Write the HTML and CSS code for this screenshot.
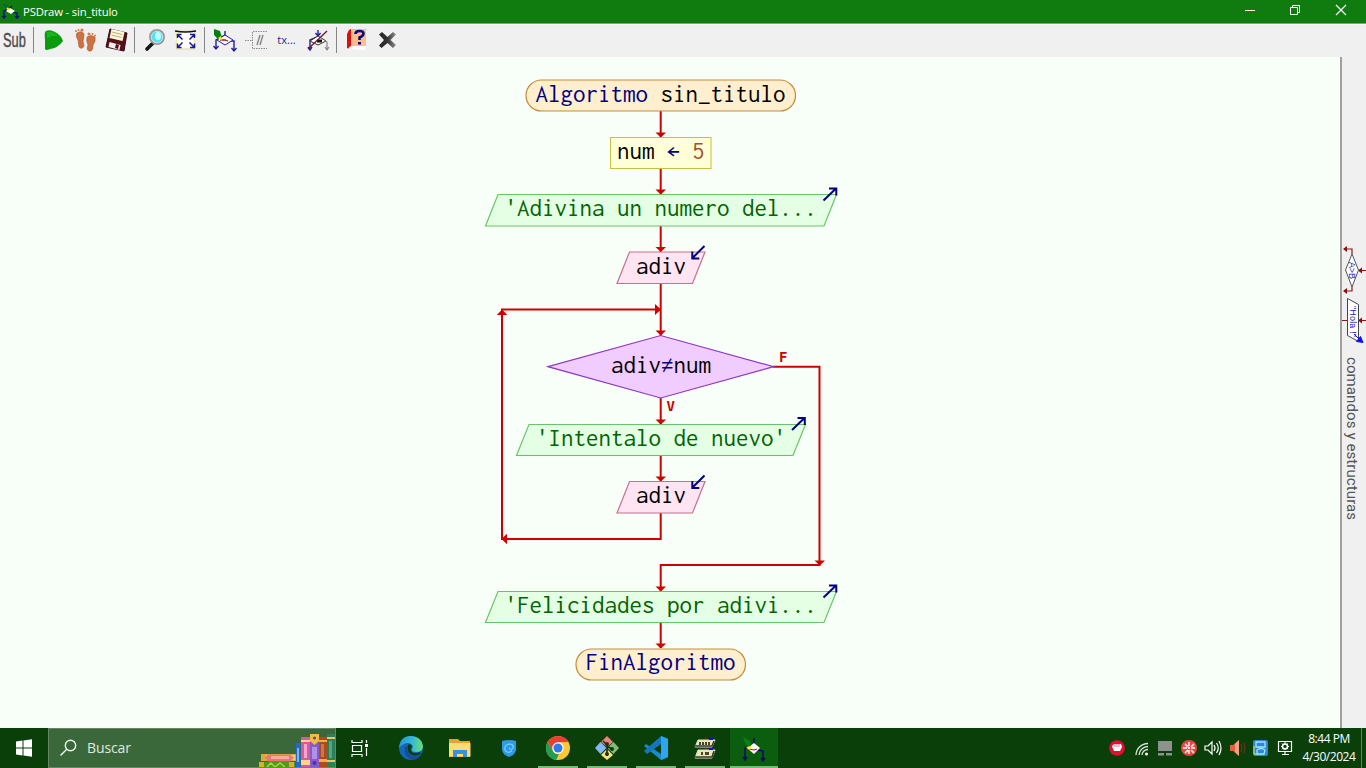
FILE: index.html
```html
<!DOCTYPE html>
<html lang="es">
<head>
<meta charset="utf-8">
<title>PSDraw - sin_titulo</title>
<link rel="stylesheet" href="styles.css">
</head>
<body>
<div class="window">
  <header class="titlebar">
    <svg class="title-icon" width="22" height="23" viewBox="0 0 22 23"><path d="M9 9l-5 2v7m-2-2 2 2 2-2M9 9l3-3M12 12l5 1v5m-2-2 2 2 2-2" fill="none" stroke="#101080" stroke-width="1.4"/><path d="M6 11l4-3 5 3-4 3z" fill="#fff"/><path d="M3 4l5 1 1 5-4-2z" fill="#064"/><path d="M7 8l2 2" stroke="#fe0" stroke-width="2"/></svg>
    <span class="title-text">PSDraw - sin_titulo</span>
    <svg class="win-controls" width="136" height="23" viewBox="1230 0 136 23" fill="none" stroke="#fff"><path d="M1245 10.5h10M1290.500 7.500h7v7h-7zM1292.500 7.500v-2h7v7h-2" /><path d="M1336 5l10 10m0-10-10 10" stroke-width="1.2"/></svg>
  </header>

  <nav class="toolbar">
    <div class="tool-sub"><span class="sub-label">Sub</span></div>
    <i class="sep"></i>
    <svg class="tool" viewBox="38 24 31 33"><path d="M46 31q-2 1-1 9v9q1 2 5 0 8-1 13-8-2-6-8-9-5-3-9-1z" fill="#0a9c0d"/><path d="M47 32q6-1 11 4-5-1-11 2z" fill="#18b51d"/></svg>
    <svg class="tool" viewBox="69 24 31 33"><g fill="#cb7442" stroke="#ad562e" stroke-width=".6"><path d="M77 33q5-3 7 1 0 4-1 7l1 5q-2 4-5 1l-1-7q-3-4-1-7z"/><path d="M87 37q4-3 8 0 1 4-2 8 0 7-4 6-3-1-1-6-2-4-1-8z"/></g><g fill="#d17a45"><circle cx="76" cy="31" r="1"/><circle cx="78.500" cy="30" r="1"/><circle cx="82" cy="30" r="1.600"/><circle cx="89" cy="34" r="1.500"/><circle cx="92.500" cy="34" r="1"/><circle cx="95" cy="35.500" r="1"/></g></svg>
    <svg class="tool" viewBox="100 24 31 33"><path d="M110 29l17 4-3 18-18-4z" fill="#561118" stroke="#330910"/><path d="M111.500 29l13 3-2 9-13-3z" fill="#fff9d9"/><path d="M112 32l10 2.500M111.500 35l10 2.500" stroke="#b9ac83"/><path d="M109.500 42l11 3-1 5-11-3z" fill="#eee"/><path d="M116 44l3 1-1 4-3-1z" fill="#561118"/></svg>
    <i class="sep"></i>
    <svg class="tool" viewBox="139 24 31 33"><path d="M153 43l-6 6" stroke="#161616" stroke-width="3.600" stroke-linecap="round"/><circle cx="157" cy="37" r="7" fill="#50e4f7" stroke="#999" stroke-width="2"/><circle cx="157" cy="37" r="5.800" fill="none" stroke="#d5dddd"/><ellipse cx="158" cy="36" rx="3" ry="4" fill="#b9ffff"/></svg>
    <svg class="tool" viewBox="170 24 31 33"><path d="M175.500 31h20v18h-20z" fill="#fff"/><path d="M176 32l1 6q-2 5 0 11M195 32l-1 6q2 5 0 11" fill="none" stroke="#f1efa4" stroke-width="2"/><path d="M175 31h21M176 49h19" stroke="#ddd79a" stroke-width="1"/><path d="M175 31q10 2 21 0" fill="none" stroke="#111" stroke-width="1.500"/><path d="M177.500 38v-3.500h4m-4 0 5 5M190 34.500h4.500V38m0-3.500-5 5M177.500 43.500V47.500h4m-4 0 5-5M190 47.500h4.500v-4m0 4-5-5" fill="none" stroke="#1717a4" stroke-width="1.500"/></svg>
    <i class="sep"></i>
    <svg class="tool" viewBox="209 24 31 33"><path d="M225 31v4l-9 5v8m-2.500-2 2.500 3 2.500-3M230 41h4v9m-2.500-2 2.500 3 2.500-3" fill="none" stroke="#2020a0" stroke-width="1.400"/><path d="M217 40l8-5 8 5-8 5z" fill="#fff" stroke="#2020a0"/><path d="M220 40h5l3 1" stroke="#b01010" stroke-width="1.300" fill="none"/><path d="M214 29l6 2 2 7-4 1-4-4z" fill="#008010"/><path d="M218 38l3-2 1 5z" fill="#fe0"/></svg>
    <svg class="tool" viewBox="240 24 31 33" fill="none" stroke="#8a8a8a"><path d="M245 40.500h7M267 31.500h-14.500v17H267" stroke-dasharray="1.500 1"/><path d="M260 35l-3 10m6-10-3 10" stroke-width="1.500"/></svg>
    <span class="tool tool-text">tx...</span>
    <svg class="tool" viewBox="302 24 31 33"><path d="M318 30v5m-2.500-2 2.500 3 2.500-3M317 37l-7 3v9m-2-2 2 3 2-3" fill="none" stroke="#2020a0" stroke-width="1.400"/><path d="M310 41l8-5 8 5-8 4z" fill="#fff" stroke="#333"/><path d="M317 41h5" stroke="#111" stroke-width="3"/><path d="M325 41l2 1v7m-2-2 2 3 2-3" fill="none" stroke="#888" stroke-width="1.200"/><path d="M308 49l19-18" stroke="#74202a" stroke-width="1.400"/></svg>
    <i class="sep"></i>
    <svg class="tool" viewBox="341 24 31 33"><path d="M349 30l-2 4v14l4 1V29z" fill="#d60f0f"/><path d="M351 29h15v17h-15z" fill="#ffbf86"/><path d="M351 46h15l-1 4-15-1q-3-1 1-3z" fill="#fff"/><path d="M355.500 34q0-3 4-3t4 2.500q0 2.500-4 4V40" fill="none" stroke="#08088a" stroke-width="2.600"/><path d="M358 42h3v2.500h-3z" fill="#08088a"/></svg>
    <svg class="tool" viewBox="372 24 31 33"><defs><linearGradient id="steel"><stop stop-color="#252525"/><stop offset=".5" stop-color="#333"/><stop offset="1" stop-color="#929292"/></linearGradient></defs><path d="M382 32l5.500 5 5.500-5 3 2.500-5.500 5.500 5.500 5-3 3-5.500-5-6 5-2.500-2.500 5-5.500-5-5.500z" fill="url(#steel)"/></svg>
  </nav>

  <main class="workspace">
    <svg class="canvas" width="1340" height="671" viewBox="0 57 1340 671">
      <g class="flow">
        <path d="M660.700 111v26M660.700 168.500V194M660.700 226v26M660.700 283.500V336M660.700 398v26M660.700 456v26M660.700 513v26H502V309.500H660M773 366.700h46.500V565H660.700v26M660.700 623v25"/>
      </g>
      <g class="heads">
        <path d="M655.500 132.500h10.500l-5.200 5zM655.500 189.500h10.500l-5.200 5zM655.500 247h10.500l-5.200 5zM655.500 330.500h10.500l-5.200 5zM655.500 419.500h10.500l-5.200 5zM655.500 476.500h10.500l-5.200 5zM655.500 586.500h10.500l-5.200 5zM655.500 643.500h10.500l-5.200 5zM814.500 560.500h10.500l-5.200 5zM496.800 315h10.500l-5.200-5.500zM655 304v11l6-5.500zM507 533.800v10.400l-5.500-5.200z"/>
      </g>
      <g class="terminal"><rect x="526" y="80" width="269.500" height="31" rx="15.500"/><rect x="576" y="649" width="169.500" height="31" rx="15.500"/></g>
      <rect class="assign" x="610.500" y="137.500" width="100.500" height="31"/>
      <g class="output"><path d="M498 194.500h338.500l-12.500 31.500H485.500zM529 424.500h276.500L793 455.500H516.500zM498 591.500h338.500L824 622.500H485.500z"/></g>
      <g class="input"><path d="M629.500 252h75.500l-12.500 31.500H617zM629.500 481.500h75.500l-12.500 31.500H617z"/></g>
      <path class="cond" d="M548 366.700l112.700-31.200 113 31.200-113 31.300z"/>
      <g class="marks">
        <path d="M823.500 200.500l12.500-12M829 188.500h7.300v7M792 430l12.500-12M797.500 418h7.300v7M823.500 597.500l12.500-12M829 585.500h7.300v7M704.500 246l-12 12M692.300 251.500v7h7M704.500 475.500l-12 12M692.300 481v7h7"/>
      </g>
      <g class="code">
        <text x="535.500" y="101.500" textLength="250"><tspan class="kw">Algoritmo</tspan> sin_titulo</text>
        <text x="617" y="159" textLength="87.500">num <tspan class="kw">←</tspan> <tspan class="num">5</tspan></text>
        <text class="str" x="504.500" y="216" textLength="312.500">'Adivina un numero del...</text>
        <text x="636" y="273.500" textLength="50">adiv</text>
        <text x="611" y="372.500" textLength="100">adiv<tspan class="kw">≠</tspan>num</text>
        <text class="str" x="536" y="445.500" textLength="250">'Intentalo de nuevo'</text>
        <text x="636" y="503" textLength="50">adiv</text>
        <text class="str" x="504.500" y="612.500" textLength="312.500">'Felicidades por adivi...</text>
        <text class="kw" x="585.500" y="670" textLength="150">FinAlgoritmo</text>
      </g>
      <text class="branch" x="779" y="362">F</text>
      <text class="branch" x="666.500" y="411">V</text>
    </svg>
    <aside class="palette">
      <svg width="24" height="104" viewBox="1342 243 24 104">
        <path d="M1352 254v-5h-7M1352 287v4h-7M1360 270.500h6M1360 320.500h6M1342 320.500h5" fill="none" stroke="#8c1717" stroke-width="1.200"/>
        <path d="M1343 249l4-3v6zM1343 291l4-3v6zM1358 270.500l4-3v6zM1358 320.500l4-3v6z" fill="#8c1010"/>
        <path d="M1352 254l6.500 16-6.500 17-6.500-17z" fill="#fff" stroke="#555"/>
        <path d="M1347.500 298.500l11 6v37l-11-6z" fill="#fff" stroke="#444"/>
        <text class="mini" transform="translate(1349 262) rotate(90)" textLength="17">A&gt;B</text>
        <text class="mini" transform="translate(1349.500 306) rotate(90)" textLength="31">"Hola !"</text>
        <path d="M1354 334l5 5M1363 342.500l-6.500-1 4-5z" fill="#11f" stroke="#11f"/>
      </svg>
      <span class="palette-label">comandos y estructuras</span>
    </aside>
  </main>

  <footer class="taskbar">
    <svg class="start" width="48" height="40" viewBox="0 728 48 40" fill="#fff"><path d="M16 741.500l6.500-1v7H16zM23.500 740.400l8.500-1.200v8.300h-8.500zM16 748.500h6.500v7l-6.500-1zM23.500 748.500H32v8.300l-8.500-1.200z"/></svg>
    <div class="search">
      <svg width="38" height="38" viewBox="49 729 38 38" fill="none" stroke="#eef5ee" stroke-width="1.400"><circle cx="70.500" cy="745.500" r="5.200"/><path d="M66.500 749.500l-6 6"/></svg>
      <span class="search-text">Buscar</span>
      <svg class="books" width="77" height="38" viewBox="258 729 77 38">
        <path d="M261 754h35v7h-35z" fill="#e5a92e"/><path d="M266 755h29v5h-29z" fill="#f7ce62"/><path d="M268 754.500h22l4 3-4 4h-22l-3-4z" fill="#e7796e"/><path d="M271 756h18v3h-18z" fill="#f5aaa0"/>
        <path d="M259 762h36v6h-36z" fill="#4d9a1e"/><path d="M259 762h5v6h-5zM289 762h5v6h-5z" fill="#dfaa35"/><path d="M267 767l4-4 4 4 5-4 5 4" stroke="#a4d545" stroke-width="1.500" fill="none"/>
        <path d="M296 743h4.500v24H296z" fill="#2866cd"/><path d="M297 748h2v14h-2z" fill="#79b5f5"/>
        <path d="M301 737h9v30h-9z" fill="#d45c9a"/><path d="M301 740h9v2h-9zM301 760h9v5h-9z" fill="#fbd587"/><path d="M304 744h3v14h-3z" fill="#f5a5cc"/>
        <path d="M310 734h9v33h-9z" fill="#855bc9"/><path d="M310 734h9v7l-4.500 4-4.500-4z" fill="#f2bd3b"/><path d="M312 747h5v12h-5z" fill="#ae91e8"/><circle cx="314.500" cy="738" r="1.500" fill="#684098"/><circle cx="314.500" cy="763" r="2" fill="#4c329f"/>
        <path d="M319 737h8v30h-8z" fill="#a94c22"/><path d="M319 740h8v2h-8zM319 759h8v3h-8z" fill="#efad42"/><path d="M321 744h3v13h-3z" fill="#cc7841"/>
        <path d="M327 734h8v33h-8z" fill="#2b8059"/><path d="M327 737h8v2h-8zM327 760h8v2h-8z" fill="#e8c671"/><path d="M329 741h3v17h-3z" fill="#52a782"/>
      </svg>
    </div>
    <svg width="50" height="40" viewBox="336 728 50 40" fill="none" stroke="#fff" stroke-width="1.200"><path d="M352 740v2.500h10V740M352.500 745.500h9v6h-9zM352 757v-2.500h10V757M366.500 740v3m0 5v8"/><path d="M365 744h3v3h-3z" fill="#fff" stroke="none"/></svg>
    <svg class="app" viewBox="386 728 49 40"><defs><linearGradient id="edge" x1="0" x2="1"><stop stop-color="#2591dd"/><stop offset=".55" stop-color="#36bad6"/><stop offset="1" stop-color="#6be06a"/></linearGradient></defs><circle cx="411" cy="748" r="12" fill="#1267b6"/><path d="M399 748q1-12 12-12 10 0 12 10 0 6-7 6-5 0-4-3 2-3-1-5-5-3-12 4z" fill="url(#edge)"/><path d="M408 745q-2 7 4 10 4 2 9-1l-1-2q-6 3-9-1-1-2 1-5-2-3-4-1z" fill="#0a3f0a"/><path d="M405 747q-2 8 5 12 6 2 11-4-6 3-10 0-5-3-3-9z" fill="#174c98"/></svg>
    <svg class="app" viewBox="435 728 49 40"><path d="M449 739h9l2 2h10v16h-21z" fill="#e9a329"/><path d="M449 743h21.500v13.500H449z" fill="#ffdb73"/><path d="M453 750h14v7h-4v-3h-6v3h-4z" fill="#3293e4"/></svg>
    <svg class="app" viewBox="484 728 49 40"><path d="M502 741q7-2 14 0v9q-1 5-7 7-6-2-7-7z" fill="#2d9bea"/><path d="M512 751q-5 3-7-1-1-5 4-6 5 0 4 4-2 3-4 0" fill="none" stroke="#83cfff" stroke-width="1.200"/></svg>
    <svg class="app running" viewBox="533 728 49 40"><circle cx="558" cy="748" r="12" fill="#fcc934"/><path d="M547.600 742a12 12 0 0 1 20.800 0H558l-5 9z" fill="#e93e31"/><path d="M547.600 742l5.400 9q2 4 6 3l-3 6a12 12 0 0 1-8.400-18z" fill="#249d52"/><circle cx="558" cy="748" r="5.800" fill="#fff"/><circle cx="558" cy="748" r="4.500" fill="#317be9"/></svg>
    <svg class="app running" viewBox="582 728 49 40"><path d="M607 736l6 6-6 5-6-5z" fill="#f28080"/><path d="M595 748l5.500-6 6 6-6 6z" fill="#86b7f5"/><path d="M613.500 742l5.500 6-5.500 6-6-6z" fill="#81bd78"/><path d="M607 749l6 6-6 5-6-5z" fill="#ffe078"/><path d="M603 741l4 4v11m0-10 6 4" stroke="#17371b" stroke-width="1.700" fill="none"/><g fill="#17371b"><circle cx="607" cy="744" r="2"/><circle cx="607" cy="754" r="2"/><circle cx="612" cy="749" r="2"/></g></svg>
    <svg class="app running" viewBox="631 728 49 40"><path d="M661 736l7 3v18l-7 3-17-14 2-2 15 10z" fill="#168bd2"/><path d="M644 751l17-15v8l-14 10z" fill="#1676bd"/><path d="M661 736l7 3v18l-7 3z" fill="#2aa7f2"/></svg>
    <svg class="app running" viewBox="680 728 49 40"><path d="M706 737v23" stroke="#a11"/><path d="M698 740h17l-3 7h-17zM698 750h17l-3 8h-17z" fill="#eee8a8" stroke="#ddd"/><path d="M695 746h17l2-5M695 757h17l2-6" fill="none" stroke="#333" stroke-width="1.500"/><path d="M700 742v3m3-3v3m3-3v3m3-3v3M702 752v3m4-3v3m2-3v3" stroke="#111" stroke-width="1.500"/><path d="M709 739h4M709 749h4" stroke="#1111c5" stroke-width="2"/></svg>
    <svg class="app running active" viewBox="729 728 49 40"><path d="M754 738v6l-9 4v11m-2-2 2 3 2-3M758 750l5 1v9m-2-2 2 3 2-3" fill="none" stroke="#090968" stroke-width="1.500"/><path d="M747 748l7-5 6 5-6 6z" fill="#fff"/><path d="M749 749l5 1 3-1" stroke="#a11" fill="none"/><path d="M743 737l7 4 1 6-5-2z" fill="#078311"/><path d="M746 747l4 3 1-4z" fill="#fe0"/></svg>
    <div class="tray">
      <svg viewBox="1105 728 24 40"><circle cx="1117" cy="748" r="7.800" fill="#e80b35"/><path d="M1112 746l2-2h7l1 3-2 4h-6l-1-2z" fill="#fff"/><path d="M1115 744v3m2-3v3m2-3v3" stroke="#e80b35" stroke-width=".6"/></svg>
      <svg viewBox="1129 728 24 40" fill="none" stroke="#d9e7d9"><path d="M1136 755a12 12 0 0 1 12-11.500M1139 755a9 9 0 0 1 9-8.500M1142 755a6 6 0 0 1 6-5.500" stroke-width="1.300"/><circle cx="1146.500" cy="754" r="1.500" fill="#fff" stroke="none"/></svg>
      <svg viewBox="1153 728 24 40" fill="#8f918f"><path d="M1158 741h14v10h-14zM1158 753h6v2.500h-6zM1166 753h6v2.500h-6z"/></svg>
      <svg viewBox="1177 728 24 40"><circle cx="1189" cy="748" r="8" fill="#e74340"/><path d="M1189 742v4m0 4v4m-6-6h4m4 0h4m-10-4 3 3m3 3 3 3m0-9-3 3m-3 3-3 3" stroke="#ffd3d3" stroke-width="1.800"/><circle cx="1189" cy="748" r="1.200" fill="#fff"/></svg>
      <svg viewBox="1201 728 24 40" fill="none" stroke="#fff" stroke-width="1.200"><path d="M1205 746h3l4-4v12l-4-4h-3zM1214 745q2 3 0 6M1216.500 743q3.500 5 0 10M1219 741q4 7 0 14"/></svg>
      <svg viewBox="1225 728 24 40"><path d="M1230 745h3l6-5v16l-6-5h-3z" fill="#e0633d"/><path d="M1235 744l4-4v16l-4-4z" fill="#f2a085"/><path d="M1241 744q2 4 0 8M1244 743q2 5 0 10" fill="none" stroke="#743425"/></svg>
      <svg viewBox="1249 728 24 40"><rect x="1253" y="740" width="15" height="16" rx="2" fill="#288ad1"/><path d="M1256 742h9v5h-9zM1257 750q4-3 8 0l-1 4h-7z" fill="none" stroke="#a9e1ff" stroke-width="1.300"/><path d="M1254 746v8h4" stroke="#e3dd67" fill="none"/></svg>
      <svg viewBox="1273 728 24 40" fill="none" stroke="#fff"><path d="M1278.500 741.500h13v10h-13zM1282 754.500h7M1285 752v3" stroke-width="1.200"/><circle cx="1285" cy="746.500" r="2.500" stroke-width="1.500"/><path d="M1285 742v9m-4-4.500h8m-7-3 6 6m0-6-6 6" stroke-dasharray="2 4"/></svg>
    </div>
    <div class="clock"><span class="time">8:44 PM</span><span class="date">4/30/2024</span></div>
    <i class="show-desktop"></i>
  </footer>
</div>
</body>
</html>
```
FILE: styles.css
```css
* { box-sizing: border-box; }
body { margin: 0; overflow: hidden; font-family: "Open Sans", "Noto Sans", sans-serif; }
svg { display: block; flex: none; }
.window { display: flex; flex-direction: column; width: 1366px; height: 768px; }
.titlebar { display: flex; height: 24px; flex: none; background: #107c10; border-bottom: 1px solid #8f998f; color: #fff; }
.title-text { font-size: 11.3px; line-height: 23px; margin-left: 1px; letter-spacing: -.17px; }
.win-controls { margin-left: auto; }
.toolbar { display: flex; height: 33px; flex: none; background: #f0f0f0; border-top: 1px solid #fff; }
.toolbar > * { margin-top: -1px; }
.tool { width: 31px; height: 33px; flex: none; }
.tool-sub { width: 30px; height: 33px; display: flex; align-items: center; padding-left: 3px; }
.sub-label { font: 20px/33px "Liberation Sans", sans-serif; color: #4a4a4a; -webkit-text-stroke: .4px #4a4a4a; transform: scaleX(.64); transform-origin: left; }
.toolbar .sep { width: 8px; height: 26px; flex: none; margin-top: 2px; background: linear-gradient(#858585, #858585) 3px 0 / 1px 26px no-repeat; }
.tool-text { font-size: 11px; line-height: 31px; text-align: center; color: #2929a0; }
.workspace { display: flex; height: 671px; flex: none; }
.canvas { background: #f8fff8; }
.palette { width: 26px; padding-top: 186px; background: #f0f0f0; border-left: 2px solid #a0a0a0; }
.palette-label { display: block; writing-mode: vertical-rl; margin: 10px 0 0 1px; font: 15px/18px Roboto, sans-serif; letter-spacing: .1px; color: #555; white-space: nowrap; }
.mini { font: 9px "Liberation Sans", sans-serif; fill: #2020b0; }
.flow { fill: none; stroke: #cf0000; stroke-width: 2; }
.heads { fill: #cf0000; }
.terminal { fill: #ffefcf; stroke: #c58b36; stroke-width: 1.2; }
.assign { fill: #ffffd7; stroke: #c2c240; }
.output { fill: #e4ffe4; stroke: #69c569; stroke-width: 1.2; }
.input { fill: #ffe4f1; stroke: #c56f91; stroke-width: 1.2; }
.cond { fill: #f1ccff; stroke: #8d38c6; stroke-width: 1.2; }
.marks { fill: none; stroke: #000080; stroke-width: 2; }
.code { font: 25px Inconsolata, "Noto Sans Mono CJK SC", monospace; fill: #000; white-space: pre; }
.code .kw, .kw { fill: #000080; }
.code .num { fill: #a6502d; }
.code .str { fill: #006400; }
.branch { font: bold 14px "DejaVu Sans Mono", monospace; fill: #cf0000; }
.taskbar { display: flex; height: 40px; flex: none; background: #0a3f0a; color: #fff; }
.search { width: 288px; height: 40px; display: flex; flex: none; background: #3a683a; border: 1px solid #658765; }
.search-text { font-size: 14px; line-height: 38px; letter-spacing: -.1px; color: #e0e9e0; }
.books { margin-left: auto; }
.app { width: 49px; height: 40px; }
.running { background: linear-gradient(#78b878, #78b878) 5px 38px / 40px 2px no-repeat; }
.active { background: linear-gradient(#78b878, #78b878) 1px 38px / 48px 2px no-repeat, linear-gradient(#0b5e0e, #0b5e0e) 1px 0 no-repeat; }
.tray { display: flex; margin-left: auto; }
.tray svg { width: 24px; height: 40px; }
.clock { width: 64px; display: flex; flex-direction: column; align-items: center; padding-top: 2px; font-size: 12px; line-height: 18px; letter-spacing: -.45px; white-space: nowrap; }
.show-desktop { width: 5px; border-left: 1px solid #628562; }
```
